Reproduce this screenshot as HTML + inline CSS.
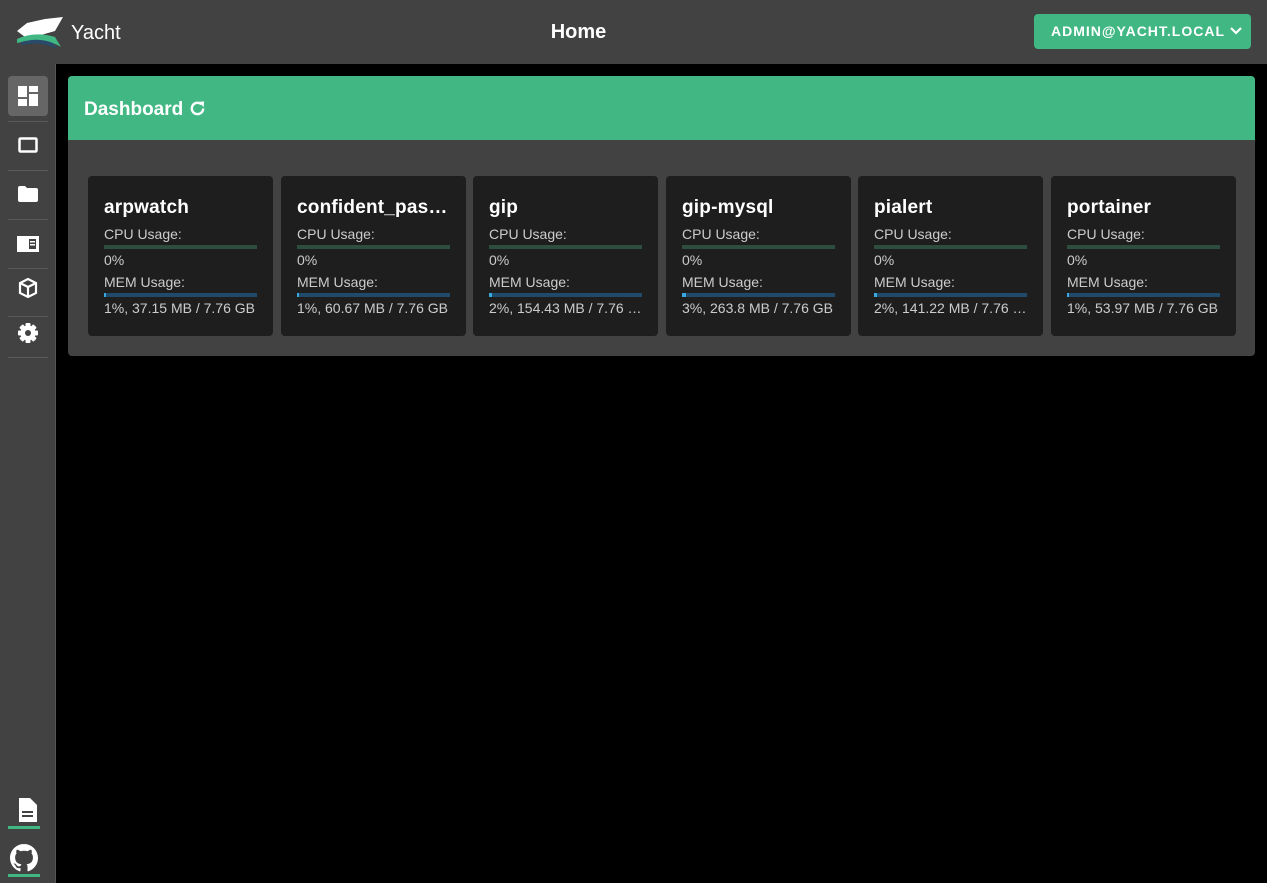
<!DOCTYPE html>
<html><head><style>
*{box-sizing:border-box;margin:0;padding:0}
body{width:1267px;height:883px;background:#000;font-family:"Liberation Sans",sans-serif;position:relative;overflow:hidden;color:#fff}
.top{position:absolute;left:0;top:0;width:1267px;height:64px;background:#424242}
.brand{position:absolute;left:71px;top:22px;font-size:20px}
.title{position:absolute;left:0;width:1157px;top:21px;text-align:center;font-size:20px;font-weight:bold}
.btn{position:absolute;left:1034px;top:14px;width:217px;height:35px;background:#41b883;border-radius:4px;font-size:14px;font-weight:bold;letter-spacing:1px;line-height:35px;padding-left:17px;white-space:nowrap}
.side{position:absolute;left:0;top:64px;width:56px;height:819px;background:#424242;border-right:1px solid #555}
.it{position:absolute;left:8px;width:40px;height:40px;display:flex;align-items:center;justify-content:center}
.sep{position:absolute;left:8px;width:40px;height:1px;background:#5a5a5a}
.panel{position:absolute;left:68px;top:76px;width:1187px;height:280px;background:#424242;border-radius:4px;overflow:hidden}
.ph{height:64px;background:#41b883;font-size:19px;font-weight:bold;padding:23px 16px}
.card{position:absolute;top:176px;width:185px;height:160px;background:#1e1e1e;border-radius:4px}
.card>*{position:absolute;left:16px;right:16px}
.card h3{top:20px;font-size:19px;letter-spacing:0.2px;font-weight:bold;white-space:nowrap;overflow:hidden;text-overflow:ellipsis;line-height:24px}
.card p{font-size:14px;color:#ccc;line-height:16px;white-space:nowrap;overflow:hidden;text-overflow:ellipsis}
.bar{height:4px}
.c1{top:50px}.b1{top:69px;background:#2d4d3e}.c2{top:76px}.c3{top:98px}.b2{top:117px;background:#1f4a6a}.c4{top:124px}
</style></head><body>
<div class="top">
<svg style="position:absolute;left:15px;top:15px" width="48" height="34" viewBox="0 0 48 34"><path d="M2 16 L12 8 L30 4 L48 2 L40 16 L26 20 L10 22 Z" fill="#fff"/><path d="M2 24 Q20 16 40 22 L46 32 Q30 22 2 28Z" fill="#41b883"/><path d="M6 27 Q24 22 38 28 L42 34 Q28 26 6 30Z" fill="#2a4a6a"/></svg>
<div class="brand">Yacht</div>
<div class="title">Home</div>
<div class="btn">ADMIN@YACHT.LOCAL<svg width="12" height="10" viewBox="0 0 12 10" style="margin-left:5px"><path d="M1 2 L6 7 L11 2" fill="none" stroke="#fff" stroke-width="2.2"/></svg></div>
</div>
<div class="side">
<div class="it" style="top:12px;background:#666;border-radius:4px"><svg width="20" height="20" viewBox="0 0 20 20" fill="#fff"><rect x="0" y="0" width="9" height="11"/><rect x="11" y="0" width="9" height="6"/><rect x="0" y="13" width="9" height="7"/><rect x="11" y="8" width="9" height="12"/></svg></div>
<div class="sep" style="top:57px"></div>
<div class="it" style="top:61px"><svg width="20" height="16"><rect x="1.5" y="1.5" width="17" height="13" rx="1" fill="none" stroke="#fff" stroke-width="2.5"/></svg></div>
<div class="sep" style="top:106px"></div>
<div class="it" style="top:110px"><svg width="20" height="16"><path d="M0 2 Q0 0 2 0 H7 L9 2 H18 Q20 2 20 4 V14 Q20 16 18 16 H2 Q0 16 0 14Z" fill="#fff"/></svg></div>
<div class="sep" style="top:155px"></div>
<div class="it" style="top:160px"><svg width="22" height="16"><rect x="0" y="0" width="22" height="16" fill="#fff"/><rect x="12" y="3" width="7" height="10" fill="#424242"/><rect x="13" y="5" width="5" height="1.5" fill="#fff"/><rect x="13" y="8" width="5" height="1.5" fill="#fff"/></svg></div>
<div class="sep" style="top:204px"></div>
<div class="it" style="top:204px"><svg width="20" height="20" viewBox="0 0 20 20" fill="none" stroke="#fff" stroke-width="2.2"><path d="M10 1 L18 5 V15 L10 19 L2 15 V5Z M2 5 L10 9 L18 5 M10 9 V19"/></svg></div>
<div class="sep" style="top:252px"></div>
<div class="it" style="top:249px"><svg width="20" height="20" viewBox="0 0 20 20"><g fill="#fff"><rect x="7.5" y="0" width="5" height="20" rx="1"/><rect x="7.5" y="0" width="5" height="20" rx="1" transform="rotate(45 10 10)"/><rect x="7.5" y="0" width="5" height="20" rx="1" transform="rotate(90 10 10)"/><rect x="7.5" y="0" width="5" height="20" rx="1" transform="rotate(135 10 10)"/><circle cx="10" cy="10" r="7.5"/></g><circle cx="10" cy="10" r="3" fill="#424242"/></svg></div>
<div class="sep" style="top:293px"></div>
<div class="it" style="top:726px"><svg width="18" height="24"><path d="M0 0 H11 L18 7 V24 H0Z" fill="#fff"/><rect x="3" y="13" width="11" height="2" fill="#424242"/><rect x="3" y="17" width="11" height="2" fill="#424242"/></svg></div>
<div style="position:absolute;left:8px;top:762px;width:32px;height:3px;background:#41b883"></div>
<div class="it" style="top:774px;left:4px"><svg width="28" height="28" viewBox="0 0 16 16"><path fill="#fff" d="M8 0C3.58 0 0 3.58 0 8c0 3.54 2.290 6.53 5.47 7.590.4.07.55-.17.55-.38 0-.19-.01-.82-.01-1.490-2.010.37-2.530-.49-2.690-.94-.09-.23-.48-.94-.82-1.130-.28-.15-.68-.52-.01-.53.63-.01 1.080.58 1.230.82.72 1.210 1.870.87 2.330.66.07-.52.28-.87.51-1.070-1.780-.2-3.640-.89-3.640-3.950 0-.87.31-1.590.82-2.150-.08-.2-.36-1.020.08-2.120 0 0 .67-.21 2.200.82.64-.18 1.320-.27 2-.27.68 0 1.360.09 2 .27 1.530-1.040 2.200-.82 2.200-.82.44 1.100.16 1.920.08 2.120.51.56.82 1.270.82 2.150 0 3.070-1.870 3.750-3.650 3.950.29.25.54.73.54 1.480 0 1.070-.01 1.930-.01 2.200 0 .21.15.46.55.38A8.013 8.013 0 0016 8c0-4.420-3.580-8-8-8z"/></svg></div>
<div style="position:absolute;left:8px;top:810px;width:32px;height:3px;background:#41b883"></div>
</div>
<div class="panel"><div class="ph">Dashboard <svg width="17" height="17" viewBox="0 0 18 18" style="vertical-align:-2px"><path d="M15 9 A6 6 0 1 1 13 4.5" fill="none" stroke="#fff" stroke-width="2.6"/><path d="M10 2 L16 1.5 L15.5 7.5Z" fill="#fff"/></svg></div></div>

<div class="card" style="left:88px"><h3>arpwatch</h3><p class="c1">CPU Usage:</p><div class="bar b1"></div><p class="c2">0%</p><p class="c3">MEM Usage:</p><div class="bar b2" style="border-left:2px solid #3aa8e0"></div><p class="c4">1%, 37.15 MB / 7.76 GB</p></div>
<div class="card" style="left:281px"><h3>confident_pastel</h3><p class="c1">CPU Usage:</p><div class="bar b1"></div><p class="c2">0%</p><p class="c3">MEM Usage:</p><div class="bar b2" style="border-left:2px solid #3aa8e0"></div><p class="c4">1%, 60.67 MB / 7.76 GB</p></div>
<div class="card" style="left:473px"><h3>gip</h3><p class="c1">CPU Usage:</p><div class="bar b1"></div><p class="c2">0%</p><p class="c3">MEM Usage:</p><div class="bar b2" style="border-left:3px solid #3aa8e0"></div><p class="c4">2%, 154.43 MB / 7.76 GB</p></div>
<div class="card" style="left:666px"><h3>gip-mysql</h3><p class="c1">CPU Usage:</p><div class="bar b1"></div><p class="c2">0%</p><p class="c3">MEM Usage:</p><div class="bar b2" style="border-left:4px solid #3aa8e0"></div><p class="c4">3%, 263.8 MB / 7.76 GB</p></div>
<div class="card" style="left:858px"><h3>pialert</h3><p class="c1">CPU Usage:</p><div class="bar b1"></div><p class="c2">0%</p><p class="c3">MEM Usage:</p><div class="bar b2" style="border-left:3px solid #3aa8e0"></div><p class="c4">2%, 141.22 MB / 7.76 GB</p></div>
<div class="card" style="left:1051px"><h3>portainer</h3><p class="c1">CPU Usage:</p><div class="bar b1"></div><p class="c2">0%</p><p class="c3">MEM Usage:</p><div class="bar b2" style="border-left:2px solid #3aa8e0"></div><p class="c4">1%, 53.97 MB / 7.76 GB</p></div>
</body></html>
